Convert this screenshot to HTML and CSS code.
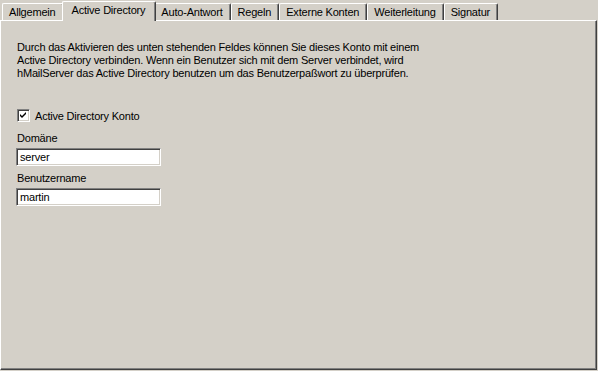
FILE: index.html
```html
<!DOCTYPE html>
<html lang="de">
<head>
    <meta charset="UTF-8">
    <title>Konto - Active Directory</title>
    <link rel="stylesheet" href="styles.css">
</head>
<body>
    <div class="tabs">
        <div class="tab">Allgemein</div>
        <div class="tab active">Active Directory</div>
        <div class="tab">Auto-Antwort</div>
        <div class="tab">Regeln</div>
        <div class="tab">Externe Konten</div>
        <div class="tab">Weiterleitung</div>
        <div class="tab">Signatur</div>
    </div>
    <div class="pane">
        <p class="info">
            Durch das Aktivieren des unten stehenden Feldes können Sie dieses Konto mit einem<br>
            Active Directory verbinden. Wenn ein Benutzer sich mit dem Server verbindet, wird<br>
            hMailServer das Active Directory benutzen um das Benutzerpaßwort zu überprüfen.
        </p>
        <label class="check">
            <span class="box">
                <svg width="7" height="7" viewBox="0 0 7 7"><path d="M0 2 L2 4 L6 0 L6 2 L2 6 L0 4 Z" fill="#000"/></svg>
            </span>
            Active Directory Konto
        </label>
        <div class="field">
            <div class="caption">Domäne</div>
            <div class="input">server</div>
        </div>
        <div class="field">
            <div class="caption">Benutzername</div>
            <div class="input">martin</div>
        </div>
    </div>
</body>
</html>
```
FILE: styles.css
```css
body {
    margin: 0;
    background: #d4d0c8;
    font-family: "Liberation Sans", Arial, sans-serif;
    font-size: 11px;
    letter-spacing: -0.2px;
    color: #000;
    width: 597px;
}
.tabs {
    display: flex;
    align-items: flex-end;
    height: 20px;
    padding-left: 2px;
    position: relative;
    z-index: 1;
}
.tab {
    height: 16px;
    line-height: 16px;
    padding: 0 7px 0 6px;
    border-top: 1px solid #fff;
    border-left: 1px solid #fff;
    border-right: 1px solid #404040;
    border-radius: 2px 2px 0 0;
    box-shadow: inset -1px 0 #808080;
    white-space: nowrap;
}
.tab.active {
    height: 19px;
    line-height: 17px;
    margin: 0 -2px -1px -2px;
    padding: 0 10px 0 9px;
    background: #d4d0c8;
    position: relative;
}
.pane {
    height: 348px;
    border-top: 1px solid #fff;
    border-left: 1px solid #fff;
    border-right: 1px solid #404040;
    border-bottom: 1px solid #404040;
    box-shadow: inset -1px -1px #808080;
    padding: 0 16px;
}
.info {
    margin: 20px 0 0 0;
    line-height: 13px;
}
.check {
    display: flex;
    align-items: center;
    gap: 5px;
    margin-top: 29px;
    height: 13px;
}
.box {
    width: 9px;
    height: 9px;
    background: #fff;
    border-top: 1px solid #808080;
    border-left: 1px solid #808080;
    border-right: 1px solid #fff;
    border-bottom: 1px solid #fff;
    box-shadow: inset 1px 1px #404040, inset -1px -1px #d4d0c8;
    padding: 1px;
    display: flex;
    align-items: center;
    justify-content: center;
}
.caption {
    height: 13px;
    line-height: 13px;
    margin-top: 10px;
}
.field + .field .caption {
    margin-top: 6px;
}
.input {
    width: 140px;
    height: 16px;
    line-height: 16px;
    margin: 3px 0 0 -1px;
    padding-left: 3px;
    background: #fff;
    border-top: 1px solid #808080;
    border-left: 1px solid #808080;
    border-right: 1px solid #fff;
    border-bottom: 1px solid #fff;
    box-shadow: inset 1px 1px #404040, inset -1px -1px #d4d0c8;
}
```
